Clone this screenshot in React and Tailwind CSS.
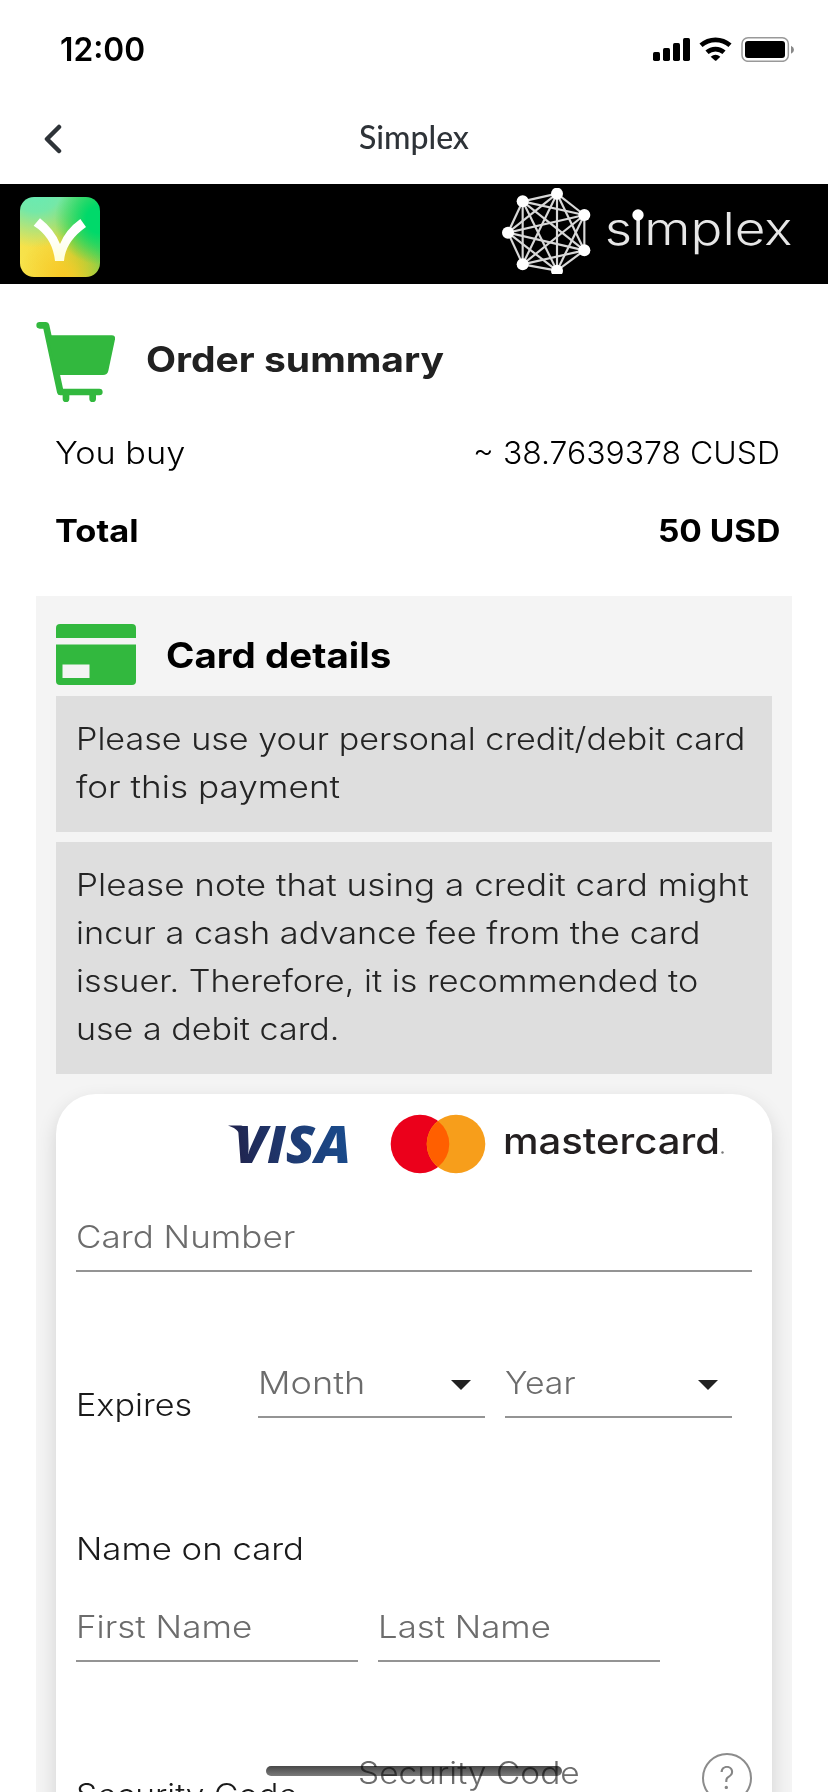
import React from "react";

const NODES = [
  [231, 41],
  [313, 105],
  [313, 211],
  [231, 272],
  [128, 253],
  [84, 158],
  [128, 64],
];

function StatusIcons() {
  return (
    <svg className="mt-9 h-[26px] w-[142px]" viewBox="717 108 426 78" aria-hidden="true">
      <rect x="717" y="156" width="21" height="27" rx="5" />
      <rect x="747" y="144" width="21" height="39" rx="5" />
      <rect x="777" y="129" width="21" height="54" rx="5" />
      <rect x="807" y="114" width="21" height="69" rx="5" />
      <path d="M861 136A66 66 0 0 1 948 136" fill="none" stroke="#000" strokeWidth="14" />
      <path d="M879 157A38 38 0 0 1 930 157" fill="none" stroke="#000" strokeWidth="14" />
      <path d="M890 170Q905 158 919 170L908 181Q905 184 902 181Z" />
      <rect x="984" y="113" width="139" height="71" rx="18" fill="none" stroke="#999" strokeWidth="4.5" />
      <rect x="993" y="123" width="120" height="51" rx="9" />
      <path d="M1131 137Q1140 141 1140 149T1131 161Z" fill="#888" />
    </svg>
  );
}

function SimplexLogo() {
  return (
    <svg className="h-[86px] w-[290px]" viewBox="66 24 870 258" aria-hidden="true">
      <g stroke="#d8d8d8" strokeWidth="6.5">
        {NODES.map(([x1, y1], i) =>
          NODES.slice(i + 1).map(([x2, y2]) => (
            <line key={`${x1}-${y1}-${x2}-${y2}`} x1={x1} y1={y1} x2={x2} y2={y2} />
          ))
        )}
      </g>
      {NODES.map(([x, y]) => (
        <circle key={`${x}-${y}`} cx={x} cy={y} r="18" fill="#fff" />
      ))}
      <text
        x="374"
        y="195"
        className="font-['Inter',sans-serif] font-light"
        fontSize="134"
        fill="#e6e6e6"
        textLength="563"
        lengthAdjust="spacingAndGlyphs"
      >
        simplex
      </text>
      <circle cx="474" cy="105" r="17" fill="#fff" />
    </svg>
  );
}

function AppIcon() {
  return (
    <div className="h-20 w-20 overflow-hidden rounded-[14px] bg-[radial-gradient(circle_at_100%_28%,#00d96a_0%,#00d96a_14%,transparent_46%),radial-gradient(circle_at_20%_-15%,#62ecb8_0%,#74e8a8_24%,transparent_56%),radial-gradient(circle_at_55%_100%,#f8c825_0%,transparent_50%),linear-gradient(75deg,#f8e44c_0%,#f4dc44_40%,#a8d23c_62%,#6fd050_85%)]">
      <svg className="h-20 w-20" viewBox="0 0 240 240" aria-hidden="true">
        <defs>
          <linearGradient id="v" x1="0" y1="0" x2="0" y2="1">
            <stop offset="0.4" stopColor="#fff" />
            <stop offset="1" stopColor="#ffffd8" />
          </linearGradient>
        </defs>
        <path
          fill="url(#v)"
          d="M60 64L41 86Q98 122 105 192H132Q136 134 198 90L181 66Q137 98 120 141Q103 98 60 64Z"
        />
      </svg>
    </div>
  );
}

function CartIcon() {
  return (
    <svg className="h-20 w-20" viewBox="0 0 240 240" aria-hidden="true">
      <g fill="none" stroke="#32b83e" strokeWidth="20" strokeLinecap="round" strokeLinejoin="round">
        <path d="M11 10H30L73 210H190" />
        <path d="M90 214V230M170 214V230" />
      </g>
      <path fill="#32b83e" d="M36 40H227Q239 40 237 52L217 146Q214 159 201 159H62Z" />
    </svg>
  );
}

function CardIcon() {
  return (
    <svg className="h-[61px] w-20" viewBox="0 0 80 61" aria-hidden="true">
      <path fill="#32b83e" d="M0 14V4Q0 0 4 0H76Q80 0 80 4V14Z" />
      <path fill="#32b83e" d="M0 20.5H80V57Q80 61 76 61H4Q0 61 0 57Z" />
      <rect x="6.5" y="40.5" width="27" height="13.5" fill="#f4f4f4" />
    </svg>
  );
}

function CardBrands() {
  return (
    <svg className="ml-[144px] h-[70px] w-[510px]" viewBox="220 1108 510 70" aria-hidden="true">
      <defs>
        <linearGradient id="visa" gradientUnits="userSpaceOnUse" x1="236" y1="1160" x2="345" y2="1140">
          <stop offset="0" stopColor="#20244e" />
          <stop offset="0.5" stopColor="#1f3a72" />
          <stop offset="1" stopColor="#1a4a8a" />
        </linearGradient>
      </defs>
      <path fill="url(#visa)" d="M228 1125.5H241Q245 1126 245.500 1131L247 1138H242Q239 1129 228 1125.500Z" />
      <text
        x="234"
        y="1162.500"
        className="font-['Open_Sans',sans-serif] font-extrabold italic"
        fontSize="52"
        fill="url(#visa)"
        textLength="117"
        lengthAdjust="spacingAndGlyphs"
      >
        VISA
      </text>
      <circle cx="420" cy="1144" r="29.300" fill="#eb001b" />
      <circle cx="456" cy="1144" r="29.300" fill="#f79e1b" />
      <path fill="#ff5f00" d="M438 1120.900A29.300 29.300 0 0 1 438 1167.100A29.300 29.300 0 0 1 438 1120.900Z" />
      <text
        x="503"
        y="1154"
        className="font-['Inter',sans-serif] font-medium"
        fontSize="36"
        fill="#231f20"
        textLength="217"
        lengthAdjust="spacingAndGlyphs"
      >
        mastercard
      </text>
      <circle cx="722.500" cy="1152.500" r="1.200" fill="#777" />
    </svg>
  );
}

function Line({ className, children }) {
  return (
    <span className={`block w-max origin-left whitespace-nowrap ${className}`}>{children}</span>
  );
}

function SelectField({ label, className }) {
  return (
    <div className="flex h-[60px] w-[227px] items-start justify-between border-b-2 border-[#949494] pr-[14px] pt-px text-[#6c6c6c]">
      <Line className={className}>{label}</Line>
      <svg className="mt-[21px] h-[10px] w-5" viewBox="0 0 20 10" aria-hidden="true">
        <path d="M0 0H20L10 10Z" fill="#212121" />
      </svg>
    </div>
  );
}

export default function App() {
  return (
    <div className="relative flex h-[1792px] w-[828px] flex-col overflow-hidden bg-white font-['Inter',sans-serif] text-[31px] font-light leading-[48px] text-black">
      <div className="flex h-24 shrink-0 items-start justify-between pl-[60px] pr-[33px]">
        <div className="mt-[26px] text-[32px] font-semibold">
          <Line className="scale-x-[0.99]">12:00</Line>
        </div>
        <StatusIcons />
      </div>

      <header className="grid h-[88px] shrink-0 grid-cols-[1fr_auto_1fr] items-start text-[#2e3338]">
        <svg className="ml-[44px] mt-[28px] h-[30px] w-[18px]" viewBox="0 0 18 30" aria-hidden="true">
          <path d="M15 3L3 15L15 27" fill="none" stroke="#2e3338" strokeWidth="4.500" strokeLinecap="round" strokeLinejoin="round" />
        </svg>
        <h1 className="mt-[17px] font-['Lato',sans-serif] text-[32px] font-medium">Simplex</h1>
      </header>

      <div className="flex h-[100px] shrink-0 items-start justify-between bg-black pl-5 pr-9">
        <div className="pt-[13px]"><AppIcon /></div>
        <div className="pt-1"><SimplexLogo /></div>
      </div>

      <section className="shrink-0 px-9 pt-[38px]">
        <div className="flex h-20 items-center gap-[30px]">
          <CartIcon />
          <h2 className="pb-[7px] text-[35px] font-bold text-[#212121]">
            <Line className="scale-x-[1.115]">Order summary</Line>
          </h2>
        </div>
        <div className="mt-[27px] flex justify-between pl-[19px] pr-3">
          <Line className="scale-x-[1.106]">You buy</Line>
          <span className="origin-right scale-x-[1.03]">~ 38.7639378 CUSD</span>
        </div>
        <div className="mt-[30px] flex justify-between pl-[19px] pr-3 font-bold">
          <Line className="scale-x-[1.11]">Total</Line>
          <span className="origin-right scale-x-[1.08]">50 USD</span>
        </div>
      </section>

      <section className="mx-9 mt-[41px] flex grow flex-col bg-[#f4f4f4] px-5 pt-7">
        <div className="flex h-[61px] items-center gap-[30px]">
          <CardIcon />
          <h2 className="text-[35px] font-bold">
            <Line className="scale-x-[1.1]">Card details</Line>
          </h2>
        </div>
        <div className="mt-[11px] flex flex-col gap-[10px] text-[#242424]">
          <p className="h-[136px] bg-[#dedede] px-5 pt-[19px]">
            <Line className="scale-x-[1.1]">Please use your personal credit/debit card</Line>
            <Line className="scale-x-[1.134]">for this payment</Line>
          </p>
          <p className="h-[232px] bg-[#dedede] px-5 pt-[19px]">
            <Line className="scale-x-[1.13]">Please note that using a credit card might</Line>
            <Line className="scale-x-[1.106]">incur a cash advance fee from the card</Line>
            <Line className="scale-x-[1.103]">issuer. Therefore, it is recommended to</Line>
            <Line className="scale-x-[1.098]">use a debit card.</Line>
          </p>
        </div>

        <div className="mt-5 h-[900px] shrink-0 rounded-[40px] bg-white px-5 pt-[14px] text-[#1a1a1a] shadow-[0_8px_20px_rgba(0,0,0,0.14)]">
          <CardBrands />
          <div className="mt-[34px] h-[60px] w-[676px] border-b-2 border-[#949494] pt-px text-[#6c6c6c]">
            <Line className="scale-x-[1.129]">Card Number</Line>
          </div>
          <div className="mt-[86px] flex">
            <div className="w-[182px] pt-[23px]">
              <Line className="scale-x-[1.102]">Expires</Line>
            </div>
            <div className="flex gap-5">
              <SelectField label="Month" className="scale-x-[1.165]" />
              <SelectField label="Year" className="scale-x-[1.09]" />
            </div>
          </div>
          <div className="mt-[96px]">
            <Line className="scale-x-[1.12]">Name on card</Line>
          </div>
          <div className="mt-[29px] flex gap-5 text-[#6c6c6c]">
            <div className="h-[60px] w-[282px] border-b-2 border-[#949494] pt-px">
              <Line className="scale-x-[1.128]">First Name</Line>
            </div>
            <div className="h-[60px] w-[282px] border-b-2 border-[#949494] pt-px">
              <Line className="scale-x-[1.122]">Last Name</Line>
            </div>
          </div>
          <div className="mt-[86px] flex items-start">
            <div className="w-[282px] pt-[23px]">
              <Line className="scale-x-[1.08]">Security Code</Line>
            </div>
            <div className="w-[344px] pt-px text-[#6c6c6c]">
              <Line className="scale-x-[1.08]">Security Code</Line>
            </div>
            <div className="mt-[5px] flex h-[50px] w-[50px] shrink-0 items-center justify-center rounded-full border-2 border-[#8c8c8c] text-[31px] font-light text-[#858585]">
              ?
            </div>
          </div>
        </div>
      </section>

      <div className="absolute left-[266px] top-[1766px] h-[10px] w-[296px] rounded-full bg-[linear-gradient(180deg,#484848,#7a7a7a)] mix-blend-multiply" />
    </div>
  );
}
